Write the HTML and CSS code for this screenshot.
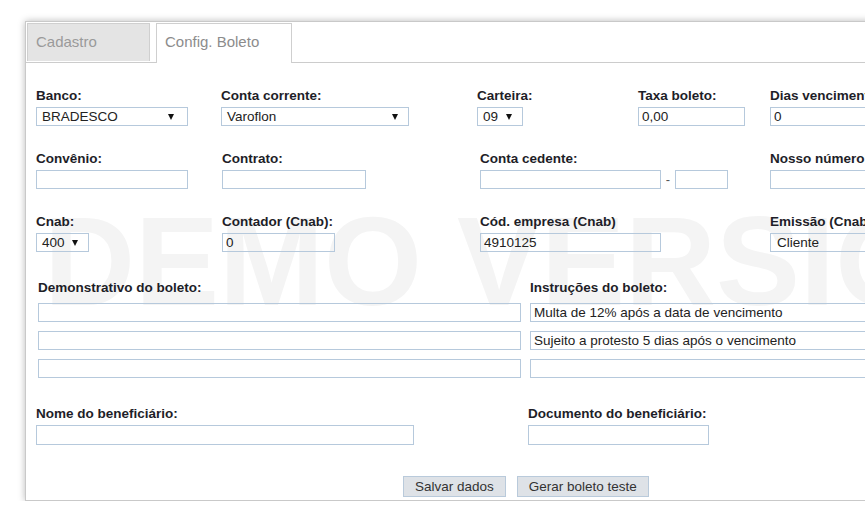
FILE: index.html
```html
<!DOCTYPE html>
<html>
<head>
    <title>Config. Boleto</title>
<link rel="stylesheet" href="styles.css">
</head>
<body>
<div class="window">
    <div class="tabs">
        <div class="tab">Cadastro</div>
        <div class="tab active">Config. Boleto</div>
    </div>

    <div class="content">
        <div class="watermark">DEMO VERSION</div>

        <div class="row row1">
            <div class="field c-banco">
                <label>Banco:</label>
                <div class="select w-banco"><span>BRADESCO</span><i class="arrow"></i></div>
            </div>
            <div class="field c-conta">
                <label>Conta corrente:</label>
                <div class="select w-conta"><span>Varoflon</span><i class="arrow"></i></div>
            </div>
            <div class="field c-carteira">
                <label>Carteira:</label>
                <div class="select w-carteira"><span>09</span><i class="arrow"></i></div>
            </div>
            <div class="field c-taxa">
                <label>Taxa boleto:</label>
                <input class="w-taxa" type="text" value="0,00">
            </div>
            <div class="field">
                <label>Dias vencimento:</label>
                <input class="w-dias" type="text" value="0">
            </div>
        </div>

        <div class="row row2">
            <div class="field c-col1">
                <label>Convênio:</label>
                <input class="w-convenio" type="text">
            </div>
            <div class="field c-col2">
                <label>Contrato:</label>
                <input class="w-contrato" type="text">
            </div>
            <div class="field c-col3">
                <label>Conta cedente:</label>
                <div class="pair">
                    <input class="w-cedente" type="text">
                    <span class="dash">-</span>
                    <input class="w-digito" type="text">
                </div>
            </div>
            <div class="field">
                <label>Nosso número:</label>
                <input class="w-dias" type="text">
            </div>
        </div>

        <div class="row row3">
            <div class="field c-col1">
                <label>Cnab:</label>
                <div class="select w-cnab"><span>400</span><i class="arrow"></i></div>
            </div>
            <div class="field c-col2">
                <label>Contador (Cnab):</label>
                <input class="w-contador" type="text" value="0">
            </div>
            <div class="field c-col3">
                <label>Cód. empresa (Cnab)</label>
                <input class="w-cedente" type="text" value="4910125">
            </div>
            <div class="field">
                <label>Emissão (Cnab):</label>
                <div class="select w-dias"><span>Cliente</span></div>
            </div>
        </div>

        <div class="row row4">
            <div class="field c-demo">
                <label>Demonstrativo do boleto:</label>
                <input class="w-demo" type="text">
                <input class="w-demo" type="text">
                <input class="w-demo" type="text">
            </div>
            <div class="field">
                <label>Instruções do boleto:</label>
                <input class="w-instr" type="text" value="Multa de 12% após a data de vencimento">
                <input class="w-instr" type="text" value="Sujeito a protesto 5 dias após o vencimento">
                <input class="w-instr" type="text">
            </div>
        </div>

        <div class="row row5">
            <div class="field c-nome">
                <label>Nome do beneficiário:</label>
                <input class="w-nome" type="text">
            </div>
            <div class="field">
                <label>Documento do beneficiário:</label>
                <input class="w-cedente" type="text">
            </div>
        </div>

        <div class="actions">
            <button class="btn">Salvar dados</button>
            <button class="btn">Gerar boleto teste</button>
        </div>
    </div>
</div>
</body>
</html>
```

FILE: styles.css
```css
html, body {
	margin: 0;
	background-color: #FFFFFF;
	overflow: hidden;
}

body {
	font-family: "Liberation Sans", Arial, sans-serif;
	color: #222;
}

.window {
	margin: 21px 0 0 25px;
	width: 900px;
	border: 1px solid #C9C9C9;
	box-shadow: 0 0 7px rgba(0, 0, 0, 0.28);
	background-color: #FFFFFF;
}

/* tabs */
.tabs {
	display: flex;
	gap: 6px;
	padding: 1px 0 0 1px;
	border-bottom: 1px solid #CCCCCC;
	height: 39px;
}

.tab {
	height: 37px;
	line-height: 36px;
	padding: 0 8px;
	width: 105px;
	font-size: 15px;
	color: #9A9A9A;
	background-color: #E4E4E4;
	border: 1px solid #CFCFCF;
	border-bottom: none;
}

.tab.active {
	width: 118px;
	background-color: #FFFFFF;
	color: #8C8C8C;
	height: 39px;
}

/* form */
.content {
	position: relative;
	padding: 25px 0 3px 10px;
}

.watermark {
	position: absolute;
	left: 18px;
	top: 136px;
	font-size: 126px;
	line-height: 1;
	font-weight: bold;
	color: #F4F4F4;
	white-space: nowrap;
	pointer-events: none;
}

.row {
	position: relative;
	display: flex;
}

.row1, .row2 { margin-bottom: 25px; }
.row3, .row4 { margin-bottom: 28px; }

.field {
	display: flex;
	flex-direction: column;
	align-items: flex-start;
}

.field label {
	font-size: 13.5px;
	line-height: 16px;
	font-weight: bold;
	color: #1E1E28;
	margin-bottom: 3px;
	white-space: nowrap;
}

.c-banco { width: 185px; }
.c-conta { width: 256px; }
.c-carteira { width: 161px; }
.c-taxa { width: 132px; }
.c-col1 { width: 186px; }
.c-col2 { width: 258px; }
.c-col3 { width: 290px; }
.c-demo { width: 492px; margin-left: 2px; }
.c-nome { width: 492px; }

.row4 .field label { margin-bottom: 7px; }

input, .select {
	box-sizing: border-box;
	height: 19px;
	border: 1px solid #B6C9DC;
	background: transparent;
	font-family: "Liberation Sans", Arial, sans-serif;
	font-size: 13.5px;
	color: #222;
	padding: 0 3px;
	margin: 0;
	outline: none;
}

.row4 input { margin-bottom: 9px; }
.row4 .field input:last-child { margin-bottom: 0; }
.row5 input { height: 20px; }

.select {
	display: flex;
	align-items: center;
	justify-content: space-between;
	padding: 0 10px 0 5px;
	line-height: 17px;
}

.arrow {
	width: 0;
	height: 0;
	border-left: 3px solid transparent;
	border-right: 3px solid transparent;
	border-top: 6px solid #111;
}

.w-banco { width: 152px; padding-right: 13px; }
.w-conta { width: 188px; }
.w-carteira { width: 46px; }
.w-cnab { width: 53px; }
.w-taxa { width: 107px; }
.w-dias { width: 140px; }
.w-convenio { width: 152px; }
.w-contrato { width: 144px; }
.w-contador { width: 113px; }
.w-cedente { width: 181px; }
.w-digito { width: 53px; }
.w-demo { width: 483px; }
.w-instr { width: 360px; }
.w-nome { width: 378px; }
.w-dias.select { padding-left: 6px; }

.pair {
	display: flex;
	align-items: center;
}

.dash {
	font-size: 13px;
	width: 14px;
	text-align: center;
	color: #555;
}

/* buttons */
.actions {
	position: relative;
	display: flex;
	gap: 11px;
	padding: 31px 0 0 367px;
}

.btn {
	height: 21px;
	padding: 0 11px;
	font-family: "Liberation Sans", Arial, sans-serif;
	font-size: 13.5px;
	color: #333;
	background-color: #DEE2E7;
	border: 1px solid #B9CADB;
	border-radius: 0;
}
```
